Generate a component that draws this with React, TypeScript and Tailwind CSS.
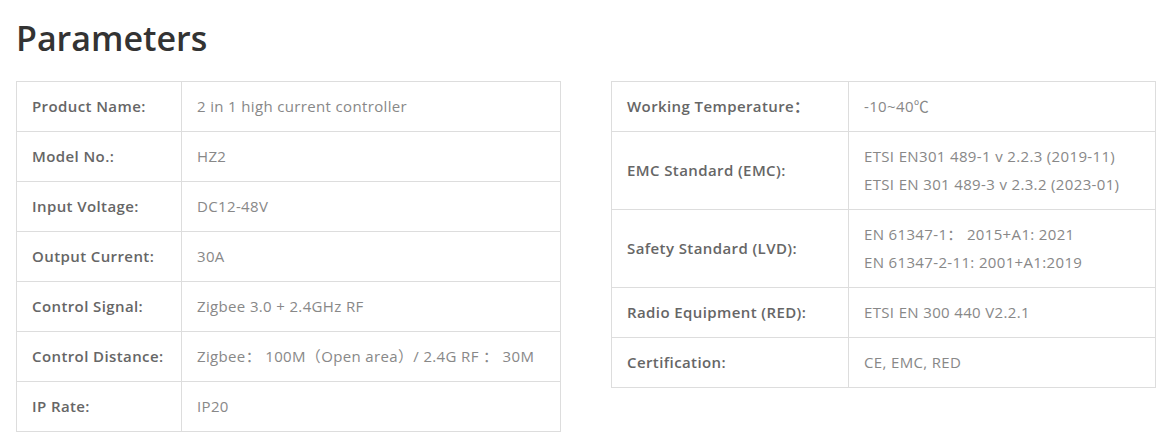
import React from "react";

type Row = { label: string; values: string[] };

const left: Row[] = [
  { label: "Product Name:", values: ["2 in 1 high current controller"] },
  { label: "Model No.:", values: ["HZ2"] },
  { label: "Input Voltage:", values: ["DC12-48V"] },
  { label: "Output Current:", values: ["30A"] },
  { label: "Control Signal:", values: ["Zigbee 3.0 + 2.4GHz RF"] },
  { label: "Control Distance:", values: ["Zigbee： 100M（Open area）/ 2.4G RF ： 30M"] },
  { label: "IP Rate:", values: ["IP20"] },
];

const right: Row[] = [
  { label: "Working Temperature：", values: ["-10~40℃"] },
  { label: "EMC Standard (EMC):", values: ["ETSI EN301 489-1 v 2.2.3 (2019-11)", "ETSI EN 301 489-3 v 2.3.2 (2023-01)"] },
  { label: "Safety Standard (LVD):", values: ["EN 61347-1： 2015+A1: 2021", "EN 61347-2-11: 2001+A1:2019"] },
  { label: "Radio Equipment (RED):", values: ["ETSI EN 300 440 V2.2.1"] },
  { label: "Certification:", values: ["CE, EMC, RED"] },
];

function Table({ rows, labelW }: { rows: Row[]; labelW: string }) {
  return (
    <table className="w-[545px] border-collapse border border-[#dddddd] text-[15px] leading-[28px]">
      <tbody>
        {rows.map((r) => (
          <tr key={r.label} className="border-b border-[#dddddd]">
            <td className={`${labelW} whitespace-nowrap border-r border-[#dddddd] px-[15px] pt-[10px] pb-[11px] align-middle font-semibold tracking-[0.4px] text-[#666666]`}>
              {r.label}
            </td>
            <td className="whitespace-pre px-[15px] pt-[10px] pb-[11px] align-middle tracking-[0.35px] text-[#888888]">
              {r.values.map((v) => (
                <div key={v}>{v}</div>
              ))}
            </td>
          </tr>
        ))}
      </tbody>
    </table>
  );
}

export default function App() {
  return (
    <div className="bg-white px-4 pt-[17px] font-['Open_Sans','Noto_Sans_CJK_SC',sans-serif]">
      <h1 className="text-[34px] font-semibold leading-[42px] text-[#333333]">Parameters</h1>
      <div className="mt-[22px] flex items-start gap-[50px]">
        <Table rows={left} labelW="w-[165px]" />
        <Table rows={right} labelW="w-[237px]" />
      </div>
    </div>
  );
}
